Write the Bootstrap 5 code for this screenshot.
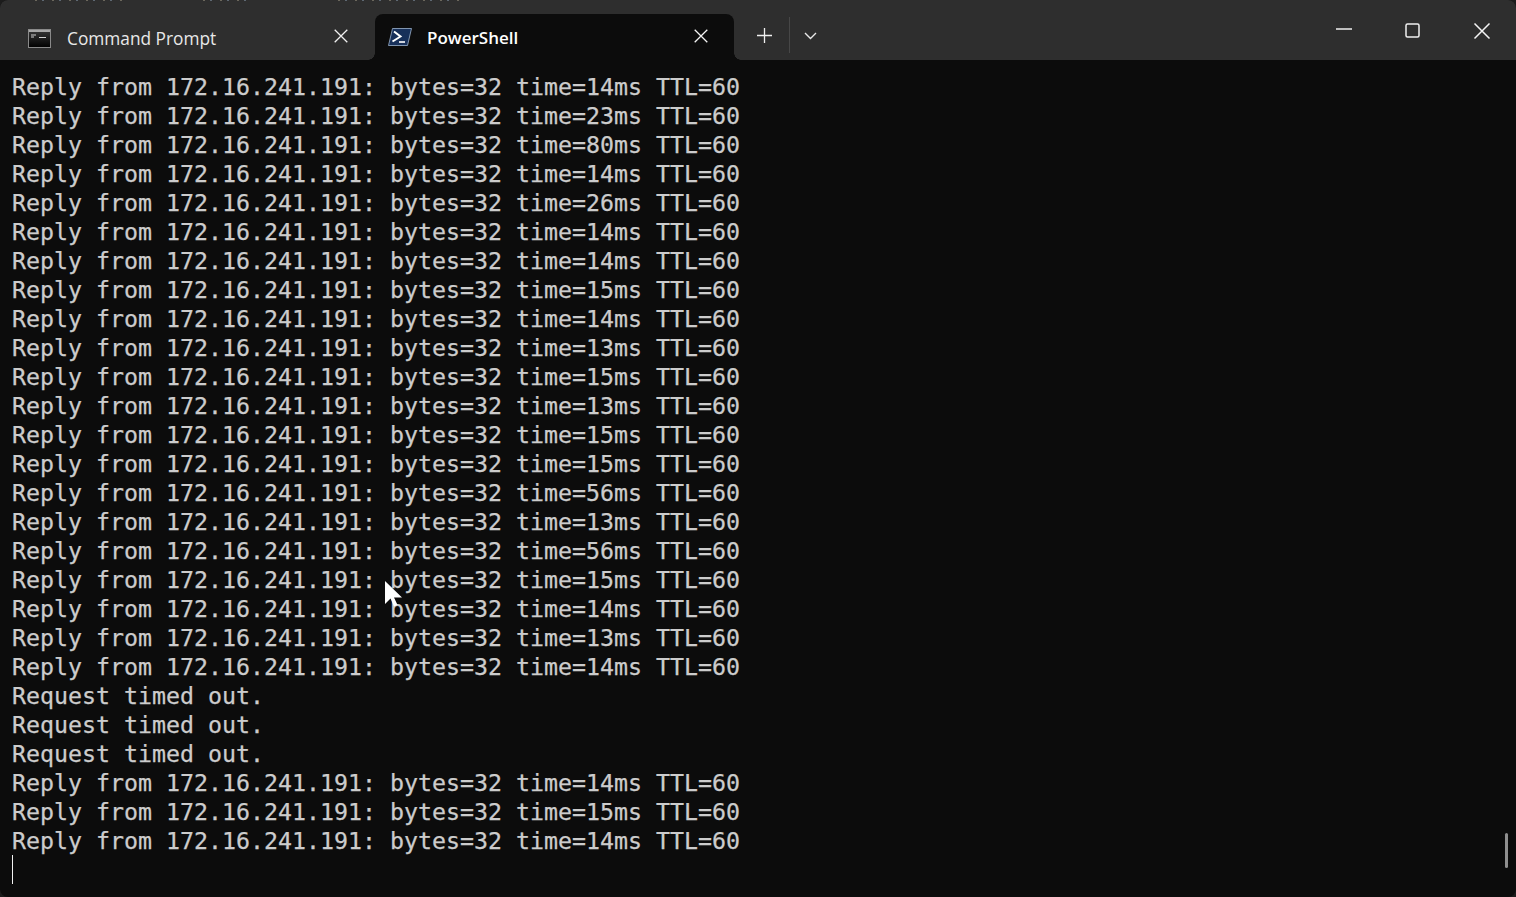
<!DOCTYPE html>
<html lang="en">
<head>
<meta charset="utf-8">
<title>PowerShell</title>
<link href="https://cdn.jsdelivr.net/npm/bootstrap@5.3.0/dist/css/bootstrap.min.css" rel="stylesheet">
<style>
html,body{height:897px;overflow:hidden;background:#1c1c1c}
.term-window{height:897px;background:#0c0c0c;position:relative;overflow:hidden;border-radius:8px}
.term-titlebar{height:60px;background:#2e2e2e;position:relative;padding-left:8px}
.term-tab{height:46px;font-family:"Open Sans","Noto Sans",sans-serif;color:#e8e8e8}
.tab-idle{width:367px;margin-top:14px;padding:2px 27px 0 20px;font-size:17.3px}
.tab-active{width:359px;margin-top:14px;background:#0c0c0c;border-radius:8px 8px 0 0;color:#fff;font-weight:600;font-size:17px;padding:0 26px 0 13px;position:relative}
.tab-active::before,.tab-active::after{content:"";position:absolute;bottom:0;width:7px;height:7px}
.tab-active::before{left:-7px;background:radial-gradient(circle at 0 0,transparent 6.5px,#0c0c0c 7px)}
.tab-active::after{right:-7px;background:radial-gradient(circle at 100% 0,transparent 6.5px,#0c0c0c 7px)}
.tab-label{margin-left:15px;flex:1 1 auto;padding-top:1px}
.tab-idle .tab-label{margin-left:16px;padding-top:1px}
.tab-close,.win-icon{display:block;flex:none}
.tab-idle .tab-close{margin-bottom:4px}
.tab-active .tab-close{margin-bottom:2px}
.tab-actions{height:46px;margin-top:14px;padding-left:23px}
.tab-divider{width:1px;height:36px;background:#474747;margin:0 14px 0 17px}
.win-controls{position:absolute;top:0;right:0}
.win-btn{width:69px;height:60px}
.term-lines{margin:0;padding:12px 0 0 12px;font-family:"DejaVu Sans Mono","Liberation Mono",monospace;font-size:23.25px;line-height:29px;color:#cccccc;white-space:pre;background:#0c0c0c;-webkit-text-stroke:.25px #cccccc}
.term-caret{display:block;width:1px;height:29px;background:#f2f2f2}
.term-scroll{position:absolute;left:1505px;top:833px;width:3px;height:35px;background:#8f8f8f;border-radius:2px}
.term-pointer{position:absolute;left:384px;top:580px;width:20px;height:28px}
.bleed-strip{position:absolute;top:0;height:1px;background:repeating-linear-gradient(90deg,#6b675c 0 2px,#2e2e2e 2px 7px,#5e6872 7px 9px,#2e2e2e 9px 17px)}
.bleed-a{left:35px;width:92px}
.bleed-b{left:203px;width:50px}
.bleed-c{left:338px;width:122px}
</style>
</head>
<body>
<div class="term-window">
  <div class="term-titlebar d-flex">
    <div class="term-tab tab-idle d-flex align-items-center">
      <svg class="win-icon" width="23" height="19" viewBox="0 0 23 19"><defs><linearGradient id="cmdbg" x1="0" y1="0" x2="0" y2="1"><stop offset="0" stop-color="#3a3a3a"/><stop offset="1" stop-color="#000"/></linearGradient></defs><rect x=".5" y=".5" width="22" height="18" fill="url(#cmdbg)" stroke="#8a8a8a"/><rect x="1" y="1" width="21" height="2" fill="#a8a8a8"/><path d="M3 6h5M3 8h3M11 8.5h7" stroke="#d0d0d0" stroke-width="1"/></svg>
      <span class="tab-label">Command Prompt</span>
      <svg class="tab-close" width="14" height="14" viewBox="0 0 14 14"><path d="M.7.7 13.3 13.3M13.3.7.7 13.3" stroke="#f0f0f0" stroke-width="1.3" fill="none"/></svg>
    </div>
    <div class="term-tab tab-active d-flex align-items-center">
      <svg class="win-icon" width="24" height="18" viewBox="0 0 24 18"><path d="M4.500.5H23.500L19.500 17.500H.5z" fill="#17305a" stroke="#9db4cf" stroke-width=".8"/><path d="M6 3.500l6.500 5L4.500 13.500" stroke="#fff" stroke-width="2" fill="none"/><path d="M11 14h6" stroke="#fff" stroke-width="1.600"/></svg>
      <span class="tab-label">PowerShell</span>
      <svg class="tab-close" width="14" height="14" viewBox="0 0 14 14"><path d="M.7.7 13.3 13.3M13.3.7.7 13.3" stroke="#f4f4f4" stroke-width="1.3" fill="none"/></svg>
    </div>
    <div class="tab-actions d-flex align-items-center">
      <svg width="15" height="15" viewBox="0 0 15 15" class="mb-1"><path d="M7.5 0v15M0 7.5h15" stroke="#f0f0f0" stroke-width="1.3"/></svg>
      <span class="tab-divider mb-1"></span>
      <svg width="13" height="9" viewBox="0 0 13 9" class="mb-1"><path d="M1 2l5.5 5.5L12 2" stroke="#e8e8e8" stroke-width="1.4" fill="none"/></svg>
    </div>
    <div class="win-controls d-flex">
      <div class="win-btn d-flex justify-content-center"><svg width="16" height="60" viewBox="0 0 16 60"><path d="M0 29h16" stroke="#f0f0f0" stroke-width="1.5"/></svg></div>
      <div class="win-btn d-flex justify-content-center"><svg width="16" height="60" viewBox="0 0 16 60"><rect x="1" y="24" width="13" height="13" rx="1.5" fill="none" stroke="#f0f0f0" stroke-width="1.5"/></svg></div>
      <div class="win-btn d-flex justify-content-center"><svg width="18" height="60" viewBox="0 0 18 60"><path d="M1.5 23.5l15 15M16.500 23.5l-15 15" stroke="#f4f4f4" stroke-width="1.5" fill="none"/></svg></div>
    </div>
  </div>
  <pre class="term-lines">Reply from 172.16.241.191: bytes=32 time=14ms TTL=60
Reply from 172.16.241.191: bytes=32 time=23ms TTL=60
Reply from 172.16.241.191: bytes=32 time=80ms TTL=60
Reply from 172.16.241.191: bytes=32 time=14ms TTL=60
Reply from 172.16.241.191: bytes=32 time=26ms TTL=60
Reply from 172.16.241.191: bytes=32 time=14ms TTL=60
Reply from 172.16.241.191: bytes=32 time=14ms TTL=60
Reply from 172.16.241.191: bytes=32 time=15ms TTL=60
Reply from 172.16.241.191: bytes=32 time=14ms TTL=60
Reply from 172.16.241.191: bytes=32 time=13ms TTL=60
Reply from 172.16.241.191: bytes=32 time=15ms TTL=60
Reply from 172.16.241.191: bytes=32 time=13ms TTL=60
Reply from 172.16.241.191: bytes=32 time=15ms TTL=60
Reply from 172.16.241.191: bytes=32 time=15ms TTL=60
Reply from 172.16.241.191: bytes=32 time=56ms TTL=60
Reply from 172.16.241.191: bytes=32 time=13ms TTL=60
Reply from 172.16.241.191: bytes=32 time=56ms TTL=60
Reply from 172.16.241.191: bytes=32 time=15ms TTL=60
Reply from 172.16.241.191: bytes=32 time=14ms TTL=60
Reply from 172.16.241.191: bytes=32 time=13ms TTL=60
Reply from 172.16.241.191: bytes=32 time=14ms TTL=60
Request timed out.
Request timed out.
Request timed out.
Reply from 172.16.241.191: bytes=32 time=14ms TTL=60
Reply from 172.16.241.191: bytes=32 time=15ms TTL=60
Reply from 172.16.241.191: bytes=32 time=14ms TTL=60
<span class="term-caret"></span></pre>
  <div class="term-scroll"></div>
  <svg class="term-pointer" viewBox="0 0 20 28"><path d="M1 1v23l5.5-5.500 3.500 8 3.500-1.500-3.500-7.500H18z" fill="#fff"/></svg>
  <div class="bleed-strip bleed-a"></div>
  <div class="bleed-strip bleed-b"></div>
  <div class="bleed-strip bleed-c"></div>
</div>
<script src="https://cdn.jsdelivr.net/npm/bootstrap@5.3.0/dist/js/bootstrap.bundle.min.js"></script>
</body>
</html>
